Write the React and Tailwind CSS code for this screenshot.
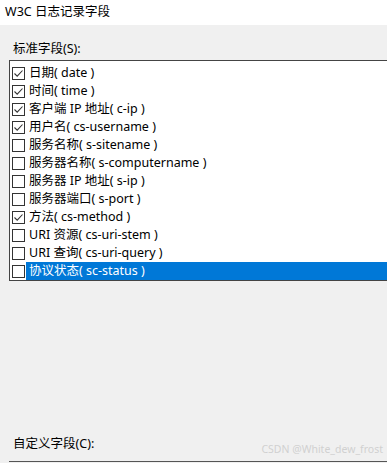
import React from 'react';

const fields = [
  { label: '日期( date )', checked: true },
  { label: '时间( time )', checked: true },
  { label: '客户端 IP 地址( c-ip )', checked: true },
  { label: '用户名( cs-username )', checked: true },
  { label: '服务名称( s-sitename )', checked: false },
  { label: '服务器名称( s-computername )', checked: false },
  { label: '服务器 IP 地址( s-ip )', checked: false },
  { label: '服务器端口( s-port )', checked: false },
  { label: '方法( cs-method )', checked: true },
  { label: 'URI 资源( cs-uri-stem )', checked: false },
  { label: 'URI 查询( cs-uri-query )', checked: false },
  { label: '协议状态( sc-status )', checked: false, selected: true },
];

const CheckBox = ({ checked }) => (
  <span className="w-[13px] h-[13px] shrink-0 border border-[#333] bg-white flex items-center justify-center">
    {checked && (
      <svg width="11" height="11" viewBox="0 0 11 11" fill="none">
        <path d="M1.5 5.5 L4.2 8.2 L9.5 2.5" stroke="#333" strokeWidth="1.1" />
      </svg>
    )}
  </span>
);

export default function App() {
  return (
    <div
      className="w-[387px] h-[463px] bg-[#f0f0f0] overflow-hidden text-black text-[12.5px]"
      style={{ fontFamily: '"Noto Sans", "Noto Sans CJK SC", sans-serif' }}
    >
      <div className="h-[25px] bg-white pl-[5px] pt-[3px] text-[12.5px] leading-[18px]">W3C 日志记录字段</div>
      <div className="pl-[13px] pt-[15px] leading-[18px]">标准字段(S):</div>
      <div className="mt-[2px] ml-[9px] border-l border-t border-b border-[#444] bg-white pt-[3px] pb-0">
        {fields.map((f) => (
          <div key={f.label} className="h-[18px] flex items-center pl-[2px]">
            <CheckBox checked={f.checked} />
            <span
              className={
                'flex-1 h-[18px] leading-[18px] pl-[3px] ml-[1px] whitespace-nowrap ' +
                (f.selected ? 'bg-[#0078d7] text-white' : '')
              }
            >
              {f.label}
            </span>
          </div>
        ))}
      </div>
      <div className="mt-[154px] flex items-end justify-between pl-[13px] pr-[4px]">
        <span className="leading-[18px]">自定义字段(C):</span>
        <span className="text-[10.5px] leading-[14px] text-[#d0d0d0] mb-[-3px]">CSDN @White_dew_frost</span>
      </div>
      <div className="mt-[8px] ml-[9px] border-t border-[#555] h-[4px]"></div>
    </div>
  );
}
